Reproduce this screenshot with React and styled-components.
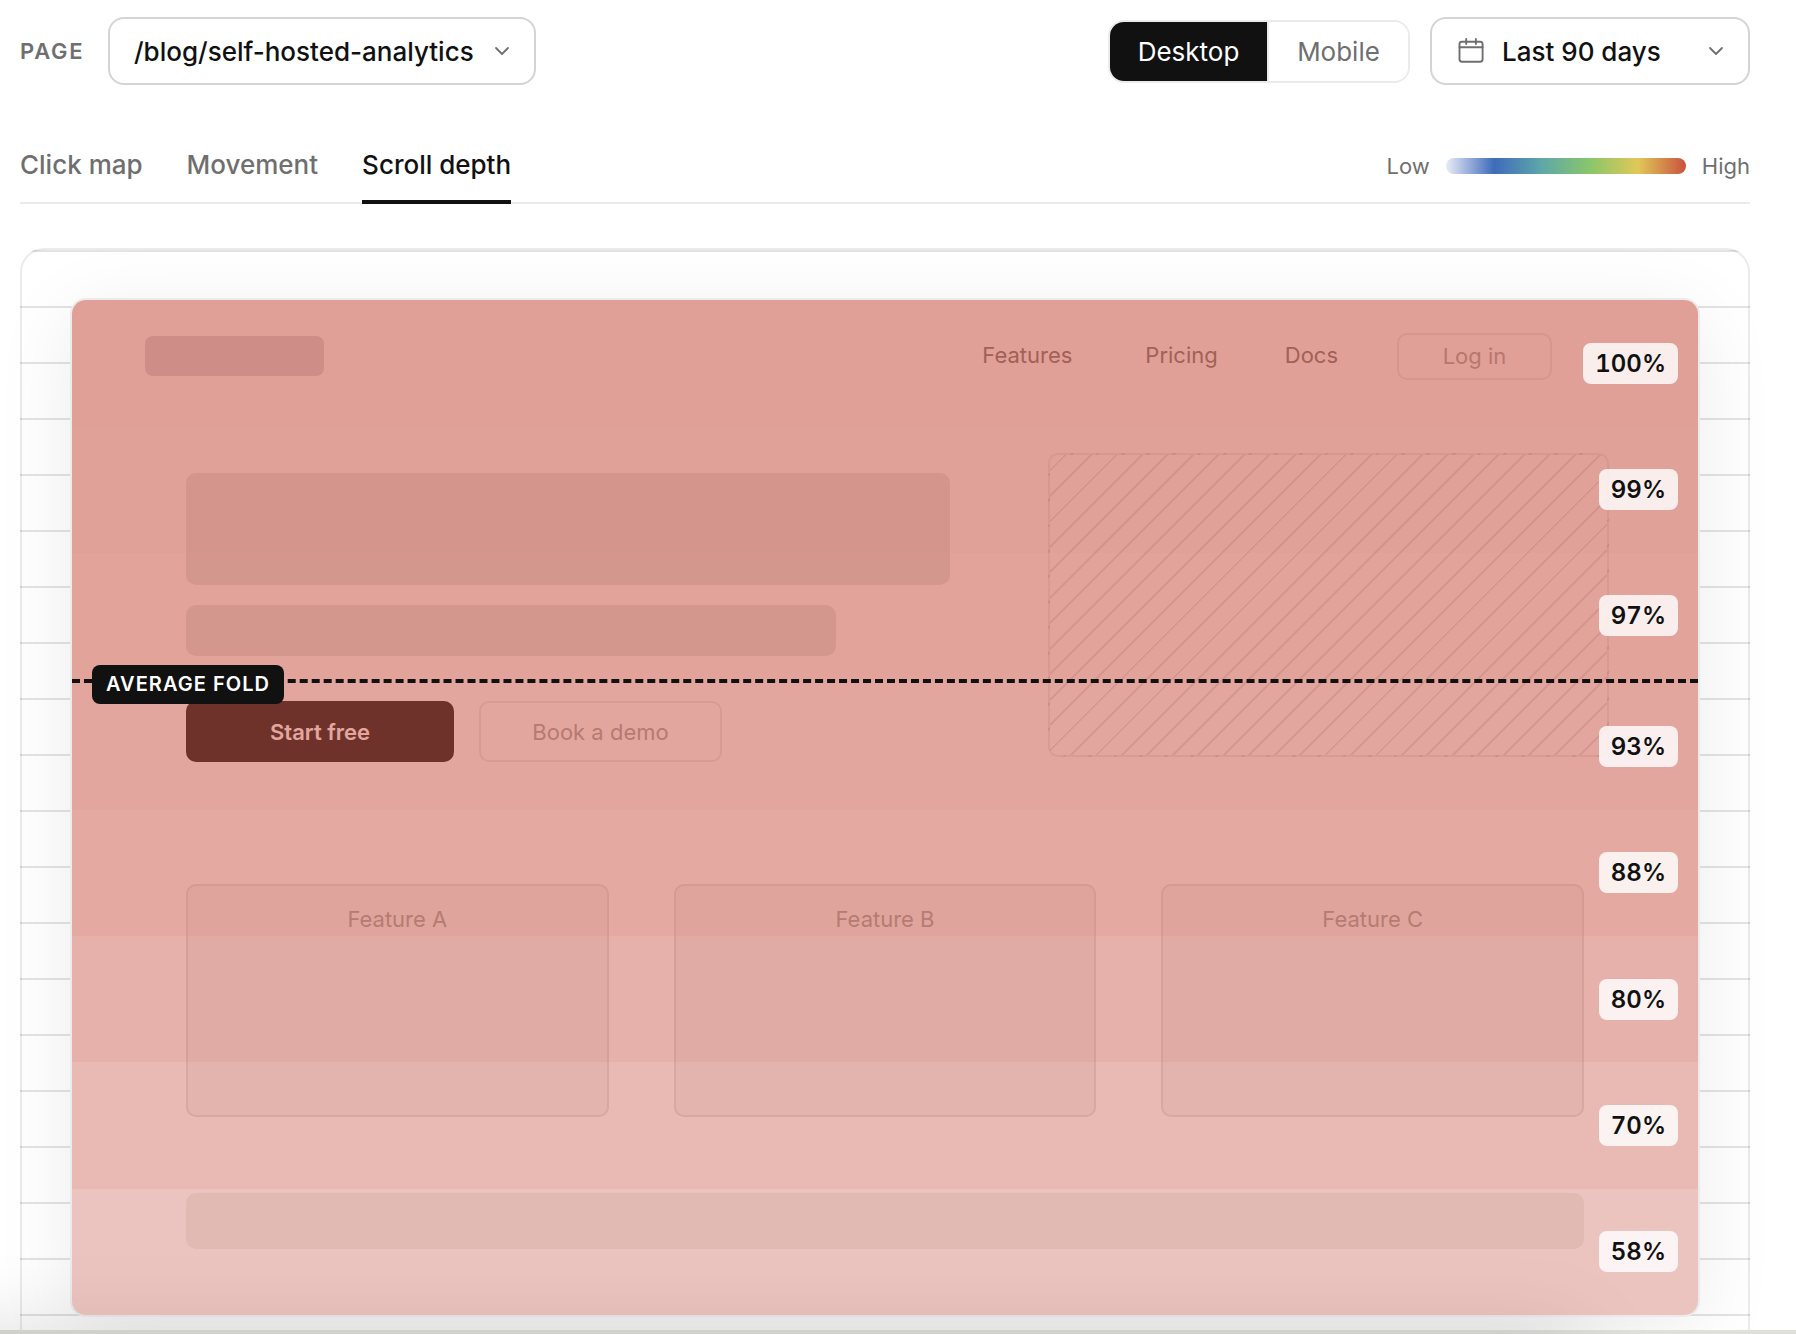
import React from "react"
import styled, { createGlobalStyle } from "styled-components"
import { ChevronDown } from "lucide-react"

const INK = "#111111"
const MUTED = "#6f6f6f"
const LINE = "rgba(0, 0, 0, 0.08)"
const LINE_STRONG = "#d4d4d4"

const GlobalStyle = createGlobalStyle`
  * {
    box-sizing: border-box;
  }

  body {
    margin: 0;
    background: #ffffff;
    color: ${INK};
    font-family: Inter, "Liberation Sans", sans-serif;
    overflow: hidden;
  }

  button {
    font-family: inherit;
    margin: 0;
  }
`

const Page = styled.div`
  position: relative;
  width: 1796px;
  height: 1334px;
  padding: 17px 46px 0 20px;
  overflow: hidden;
`

const Toolbar = styled.div`
  display: flex;
  align-items: center;
  height: 68px;
`

const ToolbarLabel = styled.span`
  width: 88px;
  font-size: 22px;
  font-weight: 600;
  letter-spacing: 0.08em;
  color: ${MUTED};
`

const Select = styled.button`
  display: flex;
  align-items: center;
  width: ${({ $width }) => $width}px;
  height: 68px;
  padding: 0 20px 0 ${({ $left }) => $left}px;
  border: 2px solid ${LINE_STRONG};
  border-radius: 16px;
  background: #ffffff;
  color: ${INK};
  font-size: 26px;
  font-weight: 500;

  svg {
    flex: 0 0 auto;
    color: ${MUTED};
  }
`

const SelectValue = styled.span`
  flex: 1 1 auto;
  text-align: left;
  white-space: nowrap;

  svg + & {
    margin-left: 17px;
  }
`

const Toggle = styled.div`
  display: flex;
  width: 302px;
  height: 63px;
  margin: 0 20px 0 auto;
  border: 2px solid #ebebeb;
  border-radius: 16px;
  overflow: hidden;
`

const ToggleOption = styled.button`
  flex: 0 0 auto;
  width: ${({ $active }) => ($active ? "157px" : "141px")};
  padding: 0;
  border: 0;
  border-left: ${({ $active }) => ($active ? "0" : "2px solid #ebebeb")};
  background: ${({ $active }) => ($active ? INK : "#ffffff")};
  color: ${({ $active }) => ($active ? "#ffffff" : MUTED)};
  font-size: 26px;
  font-weight: 400;
`

const TabBar = styled.div`
  display: flex;
  align-items: stretch;
  height: 74px;
  margin-top: 45px;
  border-bottom: 2px solid #ebebeb;
`

const Tab = styled.button`
  height: 74px;
  margin-right: 44px;
  padding: 0 0 1px;
  border: 0;
  border-bottom: 4px solid ${({ $active }) => ($active ? INK : "transparent")};
  background: none;
  color: ${({ $active }) => ($active ? INK : MUTED)};
  font-size: 26px;
  font-weight: 500;
`

const Legend = styled.div`
  display: flex;
  align-items: center;
  gap: 16px;
  height: 72px;
  margin-left: auto;
  color: ${MUTED};
  font-size: 22px;
`

const LegendBar = styled.div`
  width: 240px;
  height: 16px;
  border-radius: 8px;
  background: linear-gradient(90deg, #e8ecf6 0%, #3f6bba 20%, #5ea8a8 40%, #8ac66a 60%, #e0c858 80%, #c9523e 100%);
`

const Stage = styled.div`
  height: 1120px;
  margin-top: 44px;
  padding: 48px;
  border: 2px solid ${LINE};
  border-radius: 24px;
  background: repeating-linear-gradient(180deg, rgba(0, 0, 0, 0.11) 0 2px, transparent 2px 56px);
`

const Mock = styled.div`
  display: grid;
  height: 1019px;
  border: 2px solid #ebebeb;
  border-radius: 16px;
  background: #ffffff;
  box-shadow: 0 16px 80px rgba(0, 0, 0, 0.08);
  overflow: hidden;

  > * {
    grid-area: 1 / 1;
  }
`

const Site = styled.div`
  display: flex;
  flex-direction: column;
  padding: 33px 114px 0;
`

const SiteNav = styled.div`
  display: flex;
  align-items: center;
  height: 47px;
  margin: 0 32px 0 -41px;
  font-size: 22px;
  color: #737373;
`

const SiteLogo = styled.div`
  width: 179px;
  height: 40px;
  margin: -1px auto 0 0;
  border-radius: 8px;
  background: #d7d6dc;
`

const SiteLink = styled.span`
  margin-right: ${({ $gap }) => $gap}px;
  padding-bottom: 4px;
`

const Block = styled.div`
  width: ${({ $width }) => $width};
  height: ${({ $height }) => $height}px;
  border-radius: 10px;
  background: ${({ $color }) => $color || "#e4e5e5"};
`

const SiteButton = styled.div`
  display: flex;
  align-items: center;
  justify-content: center;
  width: ${({ $width }) => $width}px;
  height: 61px;
  border: 2px solid ${({ $primary }) => ($primary ? INK : "#ebe9e9")};
  border-radius: 10px;
  background: ${({ $primary }) => ($primary ? INK : "transparent")};
  color: ${({ $primary }) => ($primary ? "#ffffff" : "#a6a3a3")};
  font-size: 22px;
  font-weight: ${({ $primary }) => ($primary ? 600 : 400)};
`

const LoginButton = styled(SiteButton)`
  height: 47px;
  padding-bottom: 1px;
`

const Hero = styled.div`
  display: flex;
  justify-content: space-between;
  margin: 73px -25px 0 0;
`

const HeroCopy = styled.div`
  display: flex;
  flex-direction: column;
  gap: 20px;
  padding-top: 20px;
`

const HeroActions = styled.div`
  display: flex;
  gap: 25px;
  margin-top: 25px;
`

const HeroImage = styled.div`
  width: 561px;
  height: 304px;
  border: 2px solid rgba(0, 0, 0, 0.08);
  border-radius: 10px;
  background: repeating-linear-gradient(-45deg, rgba(0, 0, 0, 0.11) 0 2px, transparent 2px 18px);
`

const Features = styled.div`
  display: grid;
  grid-template-columns: repeat(3, 1fr);
  gap: 65px;
  margin-top: 122px;
`

const Feature = styled.div`
  height: 233px;
  padding-top: 20px;
  border: 2px solid #e2dfdf;
  border-radius: 10px;
  background: #f5f5f5;
  color: #a6a3a3;
  font-size: 22px;
  line-height: 27px;
  text-align: center;
`

const SiteFooter = styled(Block)`
  margin-top: 76px;
`

const Depth = styled.div`
  display: flex;
  flex-direction: column;
  z-index: 1;
`

const Band = styled.div`
  display: flex;
  flex: 1 1 0;
  align-items: center;
  justify-content: flex-end;
  padding-right: 20px;
  background: rgba(199, 82, 66, ${({ $reach }) => 0.05 + $reach * 0.005});
`

const Reach = styled.span`
  height: 41px;
  padding: 0 12px;
  border-radius: 8px;
  background: rgba(255, 255, 255, 0.82);
  font-size: 24px;
  font-weight: 600;
  line-height: 42px;
  font-variant-numeric: tabular-nums;
`

const Fold = styled.div`
  position: relative;
  flex: 0 0 4px;
  background-color: rgba(199, 82, 66, 0.525);
  border-top: 4px dashed ${INK};
`

const FoldLabel = styled.span`
  position: absolute;
  top: -18px;
  left: 20px;
  height: 39px;
  padding: 0 14px;
  border-radius: 8px;
  background: ${INK};
  color: #ffffff;
  font-size: 20px;
  font-weight: 600;
  line-height: 39px;
  letter-spacing: 0.052em;
  white-space: nowrap;
`

// card below the heatmap, only its top edge and the shadow reach the view
const NextCard = styled.div`
  position: absolute;
  left: -40px;
  top: 1330px;
  width: 2000px;
  height: 200px;
  border-top: 4px solid #dfdfdc;
`

const NextShadow = styled.div`
  position: absolute;
  left: -140px;
  top: 1334px;
  width: 1720px;
  height: 300px;
  box-shadow: 0 0 80px rgba(0, 0, 0, 0.14);
`

const CalendarIcon = () => (
  <svg width="28" height="28" viewBox="0 0 28 28" fill="none" stroke="currentColor" strokeWidth="1.9" strokeLinecap="round">
    <rect x="2.5" y="4.7" width="23.1" height="20" rx="2.4" />
    <path d="M2.5 10.2h23.1M9.2 1.9v5.2M18.9 1.9v5.2" />
  </svg>
)

const tabs = ["Click map", "Movement", "Scroll depth"]
const depths = [100, 99, 97, 93, 88, 80, 70, 58]
const foldAfter = 97

export default function App() {
  return (
    <Page>
      <GlobalStyle />
      <Toolbar>
        <ToolbarLabel>PAGE</ToolbarLabel>
        <Select $width={428} $left={24}>
          <SelectValue>/blog/self-hosted-analytics</SelectValue>
          <ChevronDown size={24} strokeWidth={1.8} />
        </Select>
        <Toggle>
          <ToggleOption $active>Desktop</ToggleOption>
          <ToggleOption>Mobile</ToggleOption>
        </Toggle>
        <Select $width={320} $left={25}>
          <CalendarIcon />
          <SelectValue>Last 90 days</SelectValue>
          <ChevronDown size={24} strokeWidth={1.8} />
        </Select>
      </Toolbar>

      <TabBar>
        {tabs.map(tab => (
          <Tab key={tab} $active={tab === "Scroll depth"}>{tab}</Tab>
        ))}
        <Legend>
          <span>Low</span>
          <LegendBar />
          <span>High</span>
        </Legend>
      </TabBar>

      <Stage>
        <Mock>
          <Site>
            <SiteNav>
              <SiteLogo />
              <SiteLink $gap={73}>Features</SiteLink>
              <SiteLink $gap={67}>Pricing</SiteLink>
              <SiteLink $gap={59}>Docs</SiteLink>
              <LoginButton $width={155}>Log in</LoginButton>
            </SiteNav>
            <Hero>
              <HeroCopy>
                <Block $width="764px" $height={112} />
                <Block $width="650px" $height={51} />
                <HeroActions>
                  <SiteButton $primary $width={268}>Start free</SiteButton>
                  <SiteButton $width={243}>Book a demo</SiteButton>
                </HeroActions>
              </HeroCopy>
              <HeroImage />
            </Hero>
            <Features>
              <Feature>Feature A</Feature>
              <Feature>Feature B</Feature>
              <Feature>Feature C</Feature>
            </Features>
            <SiteFooter $width="100%" $height={56} $color="#f0f0ee" />
          </Site>
          <Depth>
            {depths.map(reach => (
              <React.Fragment key={reach}>
                <Band $reach={reach}>
                  <Reach>{reach}%</Reach>
                </Band>
                {reach === foldAfter && (
                  <Fold>
                    <FoldLabel>AVERAGE FOLD</FoldLabel>
                  </Fold>
                )}
              </React.Fragment>
            ))}
          </Depth>
        </Mock>
      </Stage>
      <NextCard />
      <NextShadow />
    </Page>
  )
}
